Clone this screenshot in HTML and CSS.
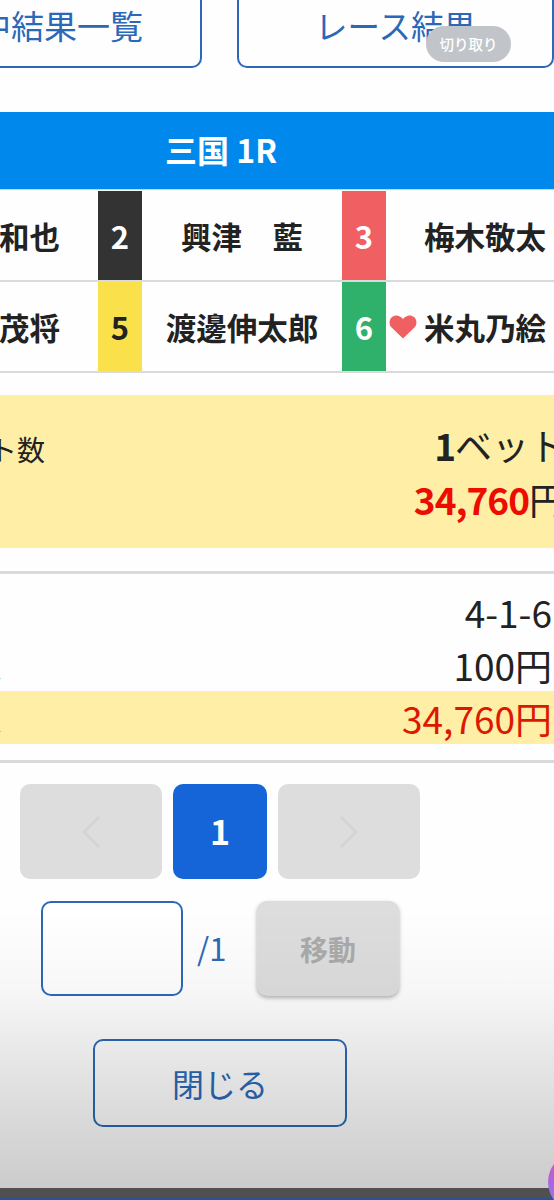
FILE: index.html
```html
<!DOCTYPE html>
<html lang="ja">
<head>
    <meta charset="UTF-8">
    <meta name="viewport" content="width=device-width, initial-scale=1.0">
    <title>投票結果 - 三国 1R</title>
    <link rel="stylesheet" href="styles.css">
</head>
<body>
    <div class="page">
        <div class="top-links">
            <a class="btn link-left"><span>中結果一覧</span></a>
            <a class="btn link-right"><span>レース結果</span></a>
        </div>

        <h1 class="race-title"><span>三国 1R</span></h1>

        <div class="racers">
            <div class="name name-left"><span>和也</span></div>
            <div class="num num-2"><span>2</span></div>
            <div class="name"><span>興津　藍</span></div>
            <div class="num num-3"><span>3</span></div>
            <div class="name name-right"><span>梅木敬太</span></div>

            <div class="name name-left"><span>茂将</span></div>
            <div class="num num-5"><span>5</span></div>
            <div class="name"><span>渡邊伸太郎</span></div>
            <div class="num num-6"><span>6</span></div>
            <div class="name name-right">
                <svg class="heart" viewBox="0 0 28 24"><path d="M14 23.5 L2.6 12.6 C-0.4 9.4 0 4.5 3 2 C6.4 -0.8 11 0.3 14 4 C17 0.3 21.6 -0.8 25 2 C28 4.5 28.4 9.4 25.4 12.6 Z"/></svg>
                <span>米丸乃絵</span>
            </div>
        </div>

        <div class="total">
            <div class="total-label"><span>ト数</span></div>
            <div class="total-values">
                <div class="total-line"><b>1</b>ベット</div>
                <div class="total-line"><b class="red">34,760</b>円</div>
            </div>
        </div>

        <div class="bet">
            <div class="bet-row"><span>4-1-6</span></div>
            <div class="bet-row"><span class="bet-label">額</span><span>100円</span></div>
            <div class="bet-row hit"><span class="bet-label">額</span><span class="amount">34,760円</span></div>
        </div>

        <div class="pager">
            <button type="button" class="page-btn" disabled>
                <svg class="arrow" viewBox="0 0 20 32"><path d="M18 1 L3 16 L18 31"/></svg>
            </button>
            <button type="button" class="page-btn current"><span>1</span></button>
            <button type="button" class="page-btn" disabled>
                <svg class="arrow" viewBox="0 0 20 32"><path d="M2 1 L17 16 L2 31"/></svg>
            </button>
        </div>

        <form class="jump">
            <input type="text" class="jump-input">
            <span class="jump-total">/1</span>
            <button type="button" class="jump-btn" disabled>移動</button>
        </form>

        <a class="btn close-btn"><span>閉じる</span></a>

        <div class="crop-badge">切り取り</div>
        <div class="shade"></div>
        <div class="bottom-bar"></div>
        <div class="bubble"></div>
    </div>
</body>
</html>
```
FILE: styles.css
```css
:root {
    --blue: #2b69b8;
    --line: #dadada;
    --yellow: #feeea6;
    --text: #222;
}

* {
    box-sizing: border-box;
}

body {
    margin: 0;
    background: #fefefe;
    color: var(--text);
    font-family: "Noto Sans CJK JP", sans-serif;
}

.page {
    position: relative;
    width: 554px;
    height: 1200px;
    overflow: hidden;
}

.btn {
    display: flex;
    align-items: center;
    justify-content: center;
    border: 2px solid var(--blue);
    border-radius: 10px;
    color: var(--blue);
    font-size: 32px;
    line-height: 40px;
}

/* 上部リンク */
.top-links {
    display: flex;
    gap: 35px;
    height: 68px;
}

.top-links .btn {
    border-top: 0;
    border-top-left-radius: 0;
    border-top-right-radius: 0;
    padding-bottom: 17px;
    font-size: 32.5px;
}

.top-links .link-left {
    width: 202px;
    border-left: 0;
    border-bottom-left-radius: 0;
    justify-content: flex-end;
    padding-right: 57px;
    font-size: 33px;
    white-space: nowrap;
}

.link-right {
    width: 317px;
}

.race-title {
    display: flex;
    align-items: center;
    justify-content: center;
    height: 78px;
    margin: 44px 0 0;
    padding: 0 112px 3px 0;
    background: #0088ec;
    border-bottom: 1px solid #b8dcf5;
    color: #fff;
    font-size: 32px;
    line-height: 40px;
}

/* 出走表 */
.racers {
    display: grid;
    grid-template-columns: 98px 44px 200px 44px 168px;
    grid-template-rows: 91px 91px;
    margin-top: 1px;
    font-size: 30.5px;
    font-weight: bold;
    line-height: 40px;
}

.name,
.num {
    display: flex;
    align-items: center;
    justify-content: center;
    border-bottom: 2px solid var(--line);
    white-space: nowrap;
}

.name-left {
    justify-content: flex-end;
    padding-right: 38px;
}

.name-right {
    justify-content: flex-end;
    padding-right: 8px;
}

.num {
    color: #fff;
    font-size: 31px;
}

.num-2 { background: #333; }
.num-3 { background: #f06062; }
.num-5 { background: #fae14c; color: var(--text); }
.num-6 { background: #2fb16c; }

.heart {
    width: 28px;
    height: 24px;
    margin-right: 7px;
    fill: #f06062;
}

/* 合計 */
.total {
    display: flex;
    justify-content: space-between;
    height: 153px;
    margin-top: 22px;
    background: var(--yellow);
}

.total-label {
    display: flex;
    justify-content: flex-end;
    width: 45px;
    padding-top: 34px;
    font-size: 28px;
    line-height: 40px;
    white-space: nowrap;
}

.total-values {
    margin-right: -12px;
    padding-top: 23px;
    font-size: 37px;
    line-height: 54px;
    text-align: right;
}

.total-line b {
    letter-spacing: -1px;
}

.red {
    color: #ec0c00;
}

/* 買い目 */
.bet {
    height: 192px;
    margin-top: 23px;
    padding-top: 11px;
    border-top: 3px solid var(--line);
    border-bottom: 3px solid var(--line);
    font-size: 37px;
}

.bet-row {
    display: flex;
    justify-content: flex-end;
    height: 53px;
    padding-right: 2px;
    line-height: 54px;
}

.bet-row.hit {
    height: 53px;
    background: var(--yellow);
}

.bet-row .bet-label {
    margin-left: -27px;
    margin-right: auto;
    font-size: 28px;
}

.amount {
    color: #dc1800;
}

/* ページ送り */
.pager {
    display: flex;
    justify-content: center;
    gap: 11px;
    width: 440px;
    margin-top: 21px;
}

.page-btn {
    display: flex;
    align-items: center;
    justify-content: center;
    width: 142px;
    height: 95px;
    padding: 0;
    border: 0;
    border-radius: 10px;
    background: #ddd;
    font-family: inherit;
}

.page-btn.current {
    width: 94px;
    padding-bottom: 3px;
    background: #1665d8;
    color: #fff;
    font-size: 34px;
    font-weight: bold;
}

.arrow {
    width: 20px;
    height: 32px;
    fill: none;
    stroke: #d4d4d4;
    stroke-width: 2.5;
}

.jump {
    display: flex;
    align-items: center;
    width: 440px;
    margin-top: 22px;
    padding-left: 41px;
}

.jump-input {
    width: 142px;
    height: 95px;
    border: 2px solid var(--blue);
    border-radius: 10px;
    background: #fff;
}

.jump-total {
    width: 74px;
    padding: 0 0 2px 14px;
    color: var(--blue);
    font-size: 31px;
    line-height: 40px;
}

.jump-btn {
    width: 142px;
    height: 95px;
    padding: 0;
    border: 0;
    border-radius: 10px;
    background: #ddd;
    box-shadow: 0 2px 4px rgba(0, 0, 0, 0.3);
    color: #aaa;
    font-family: inherit;
    font-size: 28px;
    font-weight: bold;
}

.close-btn {
    width: 254px;
    height: 88px;
    margin: 43px 0 0 93px;
}

/* 画面に重なる要素 */
.crop-badge {
    position: absolute;
    top: 26px;
    left: 426px;
    width: 85px;
    height: 36px;
    border-radius: 18px;
    background: #c1c5ca;
    color: #fff;
    font-size: 14.5px;
    font-weight: 500;
    line-height: 36px;
    text-align: center;
}

.shade {
    position: absolute;
    left: 0;
    right: 0;
    bottom: 12px;
    height: 278px;
    background: linear-gradient(rgba(0, 0, 0, 0), rgba(0, 0, 0, 0.03) 30%, rgba(0, 0, 0, 0.11) 60%, rgba(0, 0, 0, 0.2));
}

.bottom-bar {
    position: absolute;
    left: 0;
    right: 0;
    bottom: 0;
    height: 12px;
    background: #505050;
    border-bottom: 3px solid #2e5096;
}

.bubble {
    position: absolute;
    left: 548px;
    top: 1152px;
    width: 60px;
    height: 60px;
    border-radius: 50%;
    background: linear-gradient(#c45bc8 25%, #a469e0 55%, #8585f0);
}
```
